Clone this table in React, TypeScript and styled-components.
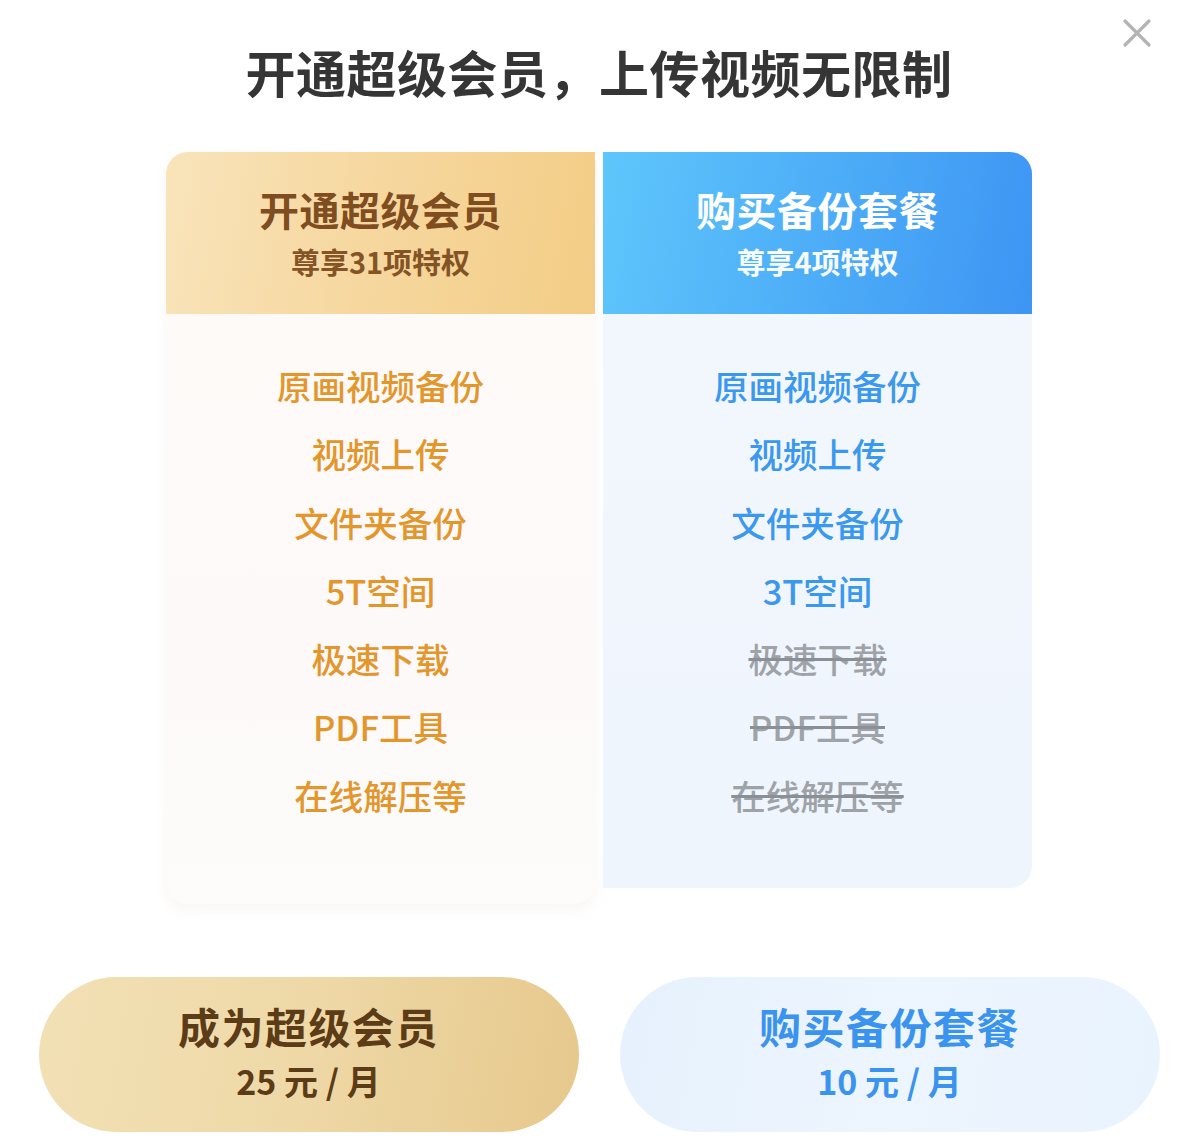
import React from "react";
import styled, { createGlobalStyle, css } from "styled-components";

const Global = createGlobalStyle`
  html, body { margin: 0; padding: 0; background: #ffffff; }
  body { font-family: "Noto Sans CJK SC", "Noto Sans", sans-serif; }
  * { box-sizing: border-box; }
`;

const Page = styled.div`
  position: relative;
  width: 1198px;
  height: 1148px;
  background: #ffffff;
  display: flex;
  flex-direction: column;
  align-items: center;
  padding-top: 38px;
`;

const Title = styled.h1`
  margin: 0;
  height: 66px;
  line-height: 66px;
  font-size: 50px;
  font-weight: 700;
  color: #353535;
  letter-spacing: 0.5px;
`;

const Close = styled.button`
  position: absolute;
  top: 16px;
  right: 44px;
  width: 34px;
  height: 34px;
  padding: 0;
  border: none;
  background: transparent;
`;

const Plans = styled.div`
  margin-top: 48px;
  display: grid;
  grid-template-columns: 429px 429px;
  column-gap: 8px;
  align-items: start;
`;

type Tone = "gold" | "blue";

const Card = styled.div<{ $tone: Tone }>`
  display: flex;
  flex-direction: column;
  border-radius: ${(p) => (p.$tone === "gold" ? "22px 0 22px 22px" : "0 22px 22px 0")};
  background: ${(p) =>
    p.$tone === "gold"
      ? "linear-gradient(180deg, #fdfaf8 0%, #fcf9f8 70%, #fdfcfb 100%)"
      : "linear-gradient(180deg, #f3f7fd 0%, #eff5fd 100%)"};
  box-shadow: ${(p) =>
    p.$tone === "gold" ? "0 6px 14px rgba(230, 220, 210, 0.25)" : "none"};
  height: ${(p) => (p.$tone === "gold" ? "752px" : "736px")};
  overflow: hidden;
`;

const Header = styled.div<{ $tone: Tone }>`
  height: 162px;
  display: flex;
  flex-direction: column;
  align-items: center;
  padding-top: 32px;
  ${(p) =>
    p.$tone === "gold"
      ? css`
          background: linear-gradient(100deg, #f9e4bb 0%, #f6d8a0 45%, #f3cd86 100%);
          color: #7f4d1f;
        `
      : css`
          background: linear-gradient(100deg, #5fc6fb 0%, #4fb0f8 45%, #3d95f3 100%);
          color: #ffffff;
        `}
`;

const HeaderTitle = styled.div`
  font-size: 40px;
  font-weight: 700;
  line-height: 50px;
  letter-spacing: 0.5px;
`;

const HeaderSub = styled.div`
  margin-top: 8px;
  font-size: 29px;
  font-weight: 700;
  line-height: 38px;
  opacity: 0.95;
`;

const FeatureList = styled.ul`
  list-style: none;
  margin: 0;
  padding: 37px 0 0;
  display: flex;
  flex-direction: column;
  align-items: center;
`;

const Feature = styled.li<{ $tone: Tone; $off?: boolean }>`
  height: 68.3px;
  line-height: 68px;
  font-size: 34.5px;
  font-weight: 500;
  color: ${(p) => (p.$off ? "#9ea3a8" : p.$tone === "gold" ? "#e3962c" : "#3b98ef")};
  ${(p) =>
    p.$off &&
    css`
      text-decoration: line-through;
      text-decoration-color: #8a9096;
      text-decoration-thickness: 3px;
    `}
`;

const Buttons = styled.div`
  margin-top: auto;
  margin-bottom: 16px;
  display: grid;
  grid-template-columns: 540px 540px;
  column-gap: 41px;
`;

const PlanButton = styled.button<{ $tone: Tone }>`
  height: 155px;
  border: none;
  border-radius: 78px;
  display: flex;
  flex-direction: column;
  align-items: center;
  justify-content: center;
  gap: 10px;
  padding-bottom: 6px;
  font-family: "Noto Sans CJK SC", "Noto Sans", sans-serif;
  font-weight: 700;
  ${(p) =>
    p.$tone === "gold"
      ? css`
          background: linear-gradient(100deg, #f2e1b6 0%, #eed8a6 50%, #e6c88c 100%);
          color: #5c3b17;
        `
      : css`
          background: linear-gradient(100deg, #e6f1fd 0%, #edf5fe 50%, #e9f3fe 100%);
          color: #3a93ee;
        `}
`;

const ButtonTitle = styled.span`
  display: block;
  font-size: 42px;
  line-height: 48px;
  letter-spacing: 1.5px;
`;

const ButtonPrice = styled.span`
  display: block;
  font-size: 34px;
  line-height: 42px;
  white-space: pre;
`;

const goldFeatures = [
  "原画视频备份",
  "视频上传",
  "文件夹备份",
  "5T空间",
  "极速下载",
  "PDF工具",
  "在线解压等",
];

const blueFeatures: { text: string; off?: boolean }[] = [
  { text: "原画视频备份" },
  { text: "视频上传" },
  { text: "文件夹备份" },
  { text: "3T空间" },
  { text: "极速下载", off: true },
  { text: "PDF工具", off: true },
  { text: "在线解压等", off: true },
];

export default function App() {
  return (
    <>
      <Global />
      <Page>
        <Close aria-label="关闭">
          <svg width="34" height="34" viewBox="0 0 34 34">
            <path d="M5 5 L29 29 M29 5 L5 29" stroke="#b3b3b3" strokeWidth="3.2" strokeLinecap="round" />
          </svg>
        </Close>
        <Title>开通超级会员，上传视频无限制</Title>
        <Plans>
          <Card $tone="gold">
            <Header $tone="gold">
              <HeaderTitle>开通超级会员</HeaderTitle>
              <HeaderSub>尊享31项特权</HeaderSub>
            </Header>
            <FeatureList>
              {goldFeatures.map((f) => (
                <Feature key={f} $tone="gold">
                  {f}
                </Feature>
              ))}
            </FeatureList>
          </Card>
          <Card $tone="blue">
            <Header $tone="blue">
              <HeaderTitle>购买备份套餐</HeaderTitle>
              <HeaderSub>尊享4项特权</HeaderSub>
            </Header>
            <FeatureList>
              {blueFeatures.map((f) => (
                <Feature key={f.text} $tone="blue" $off={f.off}>
                  {f.text}
                </Feature>
              ))}
            </FeatureList>
          </Card>
        </Plans>
        <Buttons>
          <PlanButton $tone="gold">
            <ButtonTitle>成为超级会员</ButtonTitle>
            <ButtonPrice>{"25 元 / 月"}</ButtonPrice>
          </PlanButton>
          <PlanButton $tone="blue">
            <ButtonTitle>购买备份套餐</ButtonTitle>
            <ButtonPrice>{"10 元 / 月"}</ButtonPrice>
          </PlanButton>
        </Buttons>
      </Page>
    </>
  );
}
